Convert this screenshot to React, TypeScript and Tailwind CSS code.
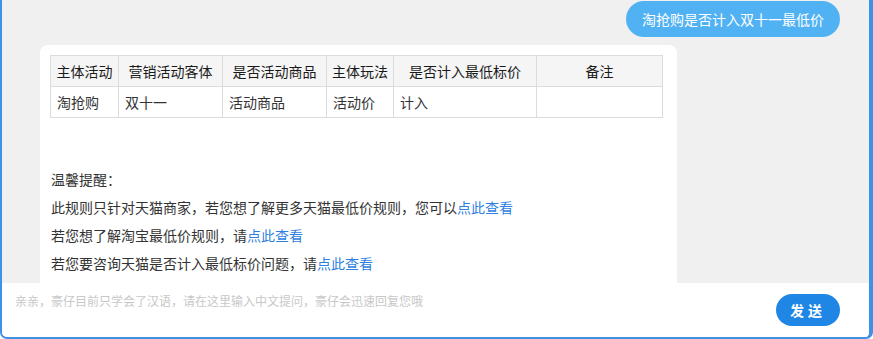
import React from "react";

const font = { fontFamily: '"Noto Sans CJK SC", "Noto Sans", sans-serif' };

const head = ["主体活动", "营销活动客体", "是否活动商品", "主体玩法", "是否计入最低标价", "备注"];
const row = ["淘抢购", "双十一", "活动商品", "活动价", "计入", ""];
const widths = ["w-[68px]", "w-[104px]", "w-[104px]", "w-[67px]", "w-[143px]", "w-[126px]"];

function Link({ children }: { children: React.ReactNode }) {
  return <span className="text-[#2f7fe0]">{children}</span>;
}

export default function App() {
  return (
    <div
      className="flex h-[339px] w-[873px] flex-col overflow-hidden rounded-b-[7px] border-b-2 border-l-2 border-r-[4px] border-[#3d91e6] bg-white"
      style={font}
    >
      {/* chat area */}
      <div className="flex h-[283px] flex-col overflow-hidden bg-[#f0f0f0] pr-[2px]">
        <div className="flex justify-end pr-[27px] pt-[1px]">
          <div className="flex h-[36px] items-center rounded-[18px] bg-[#51b2f3] px-[16px] text-[14px] text-white">
            淘抢购是否计入双十一最低价
          </div>
        </div>

        <div className="ml-[38px] mt-[8px] w-[637px] flex-1 rounded-t-[8px] bg-white pl-[10px] pt-[10px] text-[14px] text-[#333]">
          <table className="w-[612px] table-fixed border-collapse border border-[#dcdcdc]">
            <colgroup>
              {widths.map((w, i) => (
                <col key={i} className={w} />
              ))}
            </colgroup>
            <thead>
              <tr className="h-[31px] bg-[#f5f5f5]">
                {head.map((h, i) => (
                  <th key={i} className="whitespace-nowrap border border-[#dcdcdc] px-[2px] text-center font-normal text-[#1a1a1a]">
                    {h}
                  </th>
                ))}
              </tr>
            </thead>
            <tbody>
              <tr className="h-[31px]">
                {row.map((c, i) => (
                  <td key={i} className="whitespace-nowrap border border-[#dcdcdc] px-[6px] text-left">
                    {c}
                  </td>
                ))}
              </tr>
            </tbody>
          </table>

          <div className="mt-[47px] pl-[1px] leading-[28px]">
            <p>温馨提醒：</p>
            <p>
              此规则只针对天猫商家，若您想了解更多天猫最低价规则，您可以<Link>点此查看</Link>
            </p>
            <p>
              若您想了解淘宝最低价规则，请<Link>点此查看</Link>
            </p>
            <p>
              若您要咨询天猫是否计入最低标价问题，请<Link>点此查看</Link>
            </p>
          </div>
        </div>
      </div>

      {/* input area */}
      <div className="relative flex-1 bg-white">
        <div className="pl-[13px] pt-[9px] text-[12px] text-[#c8c8c8]">
          亲亲，豪仔目前只学会了汉语，请在这里输入中文提问，豪仔会迅速回复您哦
        </div>
        <button className="absolute right-[29px] top-[11px] flex h-[32px] w-[64px] items-center justify-center rounded-full bg-[#1f86e6] text-[14px] font-bold tracking-[4px] text-white">
          发送
        </button>
      </div>
    </div>
  );
}
